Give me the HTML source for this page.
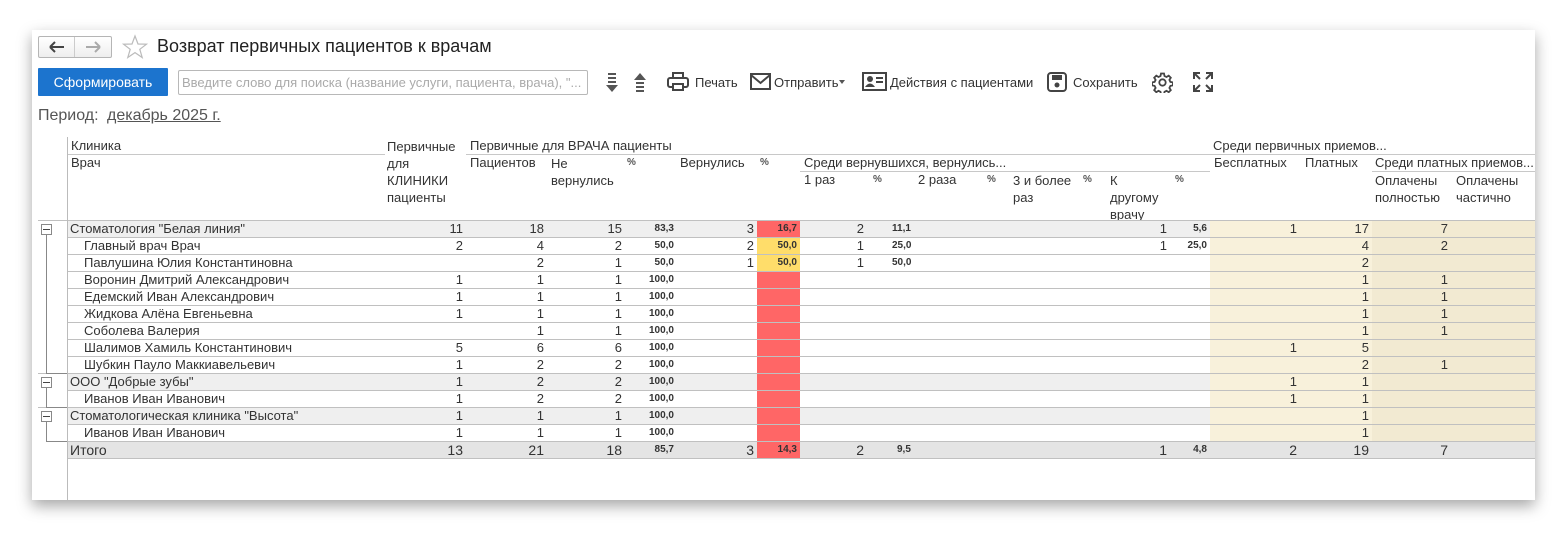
<!DOCTYPE html>
<html><head><meta charset="utf-8">
<style>
*{box-sizing:border-box;margin:0;padding:0}
body{width:1567px;height:533px;background:#fff;font-family:"Liberation Sans",Arial,sans-serif;color:#333;position:relative;overflow:hidden}
#panel{position:absolute;left:32px;top:30px;width:1503px;height:470px;background:#fff;box-shadow:0 6px 14px rgba(0,0,0,.35)}
.a{position:absolute;white-space:nowrap}
.tr{position:absolute;z-index:5}
.h{position:absolute;font-size:13px;color:#333;line-height:16px;white-space:nowrap}
.ln{position:absolute;height:1px;background:#c8c8c8}
table{position:absolute;left:38px;top:220px;border-collapse:collapse;table-layout:fixed;width:1497px}
td{height:17px;border-top:1px solid #c0c0c0;font-size:13px;line-height:16px;padding:0 3px;text-align:right;white-space:nowrap;overflow:hidden;color:#333}
td.n{text-align:left;padding-left:3px}
td.i{text-align:left;padding-left:17px}
td.p{font-size:10px;font-weight:bold;padding-right:3px;line-height:16px;vertical-align:middle}
td.t{border-top:none;background:#fff}
tr.g td{background:#efefef}
tr.s td{background:#e4e4e4;border-bottom:1px solid #c0c0c0}
tr.s td.nm{font-size:14px}
td.b1{background:#f8f1db!important}
td.b2{background:#f2ead2!important}
td.r{background:#ff6666!important}
td.y{background:#ffdd6a!important}
</style></head><body>
<div id="panel"></div>

<div class="a" style="left:38px;top:36px;width:74px;height:22px;border:1px solid #b5b5b5;border-radius:2px;background:linear-gradient(#fff,#eee)"></div>
<div class="a" style="left:74px;top:37px;width:1px;height:20px;background:#ccc"></div>
<svg class="a" style="left:48px;top:40px" width="18" height="14"><path d="M2 7H16M2 7L7 2M2 7L7 12" stroke="#444" stroke-width="2" fill="none"/></svg>
<svg class="a" style="left:84px;top:40px" width="18" height="14"><path d="M2 7H16M16 7L11 2M16 7L11 12" stroke="#aaa" stroke-width="2" fill="none"/></svg>
<svg class="a" style="left:122px;top:34px" width="26" height="25"><path d="M13 2L16 10L24.5 10.2L17.8 15.3L20.2 23.5L13 18.6L5.8 23.5L8.2 15.3L1.5 10.2L10 10Z" fill="none" stroke="#bbb" stroke-width="1.2"/></svg>
<div class="a" style="left:157px;top:36px;font-size:18px;color:#222">Возврат первичных пациентов к врачам</div>

<div class="a" style="left:38px;top:68px;width:130px;height:28px;background:#1c74ce;border-radius:1px;color:#fff;font-size:14px;line-height:28px;text-align:center">Сформировать</div>
<div class="a" style="left:178px;top:70px;width:410px;height:25px;border:1px solid #b8b8b8;border-radius:2px;font-size:13px;color:#aaa;line-height:23px;padding-left:3px">Введите слово для поиска (название услуги, пациента, врача), "...</div>

<svg class="a" style="left:605px;top:72px" width="14" height="22"><g fill="#555"><rect x="3" y="1" width="8" height="2"/><rect x="3" y="5" width="8" height="2"/><rect x="3" y="9" width="8" height="2"/><path d="M1 13H13L7 20Z"/></g></svg>
<svg class="a" style="left:633px;top:72px" width="14" height="22"><g fill="#555"><path d="M1 8H13L7 1Z"/><rect x="3" y="10" width="8" height="2"/><rect x="3" y="14" width="8" height="2"/><rect x="3" y="18" width="8" height="2"/></g></svg>
<svg class="a" style="left:667px;top:72px" width="22" height="20"><g fill="none" stroke="#444" stroke-width="2"><rect x="6" y="1" width="10" height="5"/><rect x="1" y="6" width="20" height="9" rx="2"/><rect x="6" y="12" width="10" height="6" fill="#fff"/></g></svg>
<div class="a" style="left:695px;top:75px;font-size:13px;color:#333">Печать</div>
<svg class="a" style="left:750px;top:73px" width="21" height="17"><rect x="1" y="1" width="19" height="15" fill="none" stroke="#444" stroke-width="2"/><path d="M1 2L10.5 10L20 2" fill="none" stroke="#444" stroke-width="2"/></svg>
<div class="a" style="left:774px;top:75px;font-size:13px;color:#333">Отправить</div>
<svg class="a" style="left:839px;top:80px" width="7" height="5"><path d="M0 0H6L3 4Z" fill="#555"/></svg>
<svg class="a" style="left:862px;top:72px" width="25" height="19"><rect x="1" y="1" width="23" height="17" fill="none" stroke="#444" stroke-width="2"/><circle cx="8" cy="7" r="3" fill="#444"/><path d="M3 15Q8 8 13 15Z" fill="#444"/><rect x="14" y="5" width="7" height="2" fill="#444"/><rect x="14" y="9" width="7" height="2" fill="#444"/></svg>
<div class="a" style="left:890px;top:75px;font-size:13px;color:#333">Действия с пациентами</div>
<svg class="a" style="left:1047px;top:72px" width="20" height="20"><rect x="1" y="1" width="18" height="18" rx="3" fill="none" stroke="#444" stroke-width="2"/><rect x="5" y="3" width="10" height="5" fill="#444"/><circle cx="10" cy="13" r="2.5" fill="#444"/></svg>
<div class="a" style="left:1073px;top:75px;font-size:13px;color:#333">Сохранить</div>
<svg class="a" style="left:1152px;top:72px" width="21" height="21" viewBox="0 0 21 21"><g fill="none" stroke="#444" stroke-width="1.8"><path d="M9 1.5h3l.5 2.5 2 1 2.2-1.4 2.1 2.1-1.4 2.2 1 2 2.5.5v3l-2.5.5-1 2 1.4 2.2-2.1 2.1-2.2-1.4-2 1-.5 2.5h-3l-.5-2.5-2-1-2.2 1.4-2.1-2.1 1.4-2.2-1-2-2.5-.5v-3l2.5-.5 1-2-1.4-2.2 2.1-2.1 2.2 1.4 2-1z"/><circle cx="10.5" cy="10.5" r="3.2"/></g></svg>
<svg class="a" style="left:1193px;top:72px" width="20" height="20"><g fill="none" stroke="#444" stroke-width="2"><path d="M1 7V1H7M1 1L7 7M13 1H19V7M19 1L13 7M1 13V19H7M1 19L7 13M19 13V19H13M19 19L13 13"/></g></svg>

<div class="a" style="left:38px;top:107px;font-size:16px;color:#555">Период:</div>
<div class="a" style="left:107px;top:107px;font-size:16px;color:#555;text-decoration:underline">декабрь 2025 г.</div>

<div class="a" style="left:67px;top:137px;width:1px;height:363px;background:#bbb;z-index:4"></div>
<div class="h" style="left:71px;top:138px">Клиника</div>
<div class="ln" style="left:68px;top:154px;width:317px"></div>
<div class="h" style="left:71px;top:155px">Врач</div>
<div class="h" style="left:387px;top:138px;line-height:17px">Первичные<br>для<br>КЛИНИКИ<br>пациенты</div>
<div class="h" style="left:470px;top:138px">Первичные для ВРАЧА пациенты</div>
<div class="ln" style="left:466px;top:154px;width:744px"></div>
<div class="h" style="left:470px;top:155px">Пациентов</div>
<div class="h" style="left:551px;top:155px;line-height:17px">Не<br>вернулись</div>
<div class="h" style="left:627px;top:155px;font-size:10px;font-weight:bold;color:#555">%</div>
<div class="h" style="left:680px;top:155px">Вернулись</div>
<div class="h" style="left:760px;top:155px;font-size:10px;font-weight:bold;color:#555">%</div>
<div class="h" style="left:804px;top:155px">Среди вернувшихся, вернулись...</div>
<div class="ln" style="left:800px;top:171px;width:410px"></div>
<div class="h" style="left:804px;top:172px">1 раз</div>
<div class="h" style="left:873px;top:172px;font-size:10px;font-weight:bold;color:#555">%</div>
<div class="h" style="left:918px;top:172px">2 раза</div>
<div class="h" style="left:987px;top:172px;font-size:10px;font-weight:bold;color:#555">%</div>
<div class="h" style="left:1013px;top:172px;line-height:17px">3 и более<br>раз</div>
<div class="h" style="left:1083px;top:172px;font-size:10px;font-weight:bold;color:#555">%</div>
<div class="h" style="left:1110px;top:172px;line-height:17px">К<br>другому<br>врачу</div>
<div class="h" style="left:1175px;top:172px;font-size:10px;font-weight:bold;color:#555">%</div>
<div class="h" style="left:1213px;top:138px">Среди первичных приемов...</div>
<div class="ln" style="left:1210px;top:154px;width:325px"></div>
<div class="h" style="left:1214px;top:155px">Бесплатных</div>
<div class="h" style="left:1305px;top:155px">Платных</div>
<div class="h" style="left:1375px;top:155px;width:160px;overflow:hidden">Среди платных приемов...</div>
<div class="ln" style="left:1372px;top:171px;width:163px"></div>
<div class="h" style="left:1375px;top:172px;line-height:17px">Оплачены<br>полностью</div>
<div class="h" style="left:1456px;top:172px;line-height:17px">Оплачены<br>частично</div>

<table>
<colgroup><col style="width:29px"><col style="width:318px"><col style="width:81px"><col style="width:81px"><col style="width:78px"><col style="width:52px"><col style="width:80px"><col style="width:43px"><col style="width:67px"><col style="width:48px"><col style="width:70px"><col style="width:25px"><col style="width:70px"><col style="width:27px"><col style="width:63px"><col style="width:40px"><col style="width:90px"><col style="width:72px"><col style="width:81px"><col style="width:82px"></colgroup>
<tr class="g"><td style="background:#fff"></td><td class="n">Стоматология "Белая линия"</td><td>11</td><td>18</td><td>15</td><td class="p">83,3</td><td>3</td><td class="p r">16,7</td><td>2</td><td class="p" style="text-align:left;padding-left:25px">11,1</td><td></td><td></td><td></td><td></td><td>1</td><td class="p">5,6</td><td class="b1">1</td><td class="b1">17</td><td class="b2" style="padding-right:5px">7</td><td class="b2"></td></tr>
<tr><td class="t"></td><td class="i">Главный врач Врач</td><td>2</td><td>4</td><td>2</td><td class="p">50,0</td><td>2</td><td class="p y">50,0</td><td>1</td><td class="p" style="text-align:left;padding-left:25px">25,0</td><td></td><td></td><td></td><td></td><td>1</td><td class="p">25,0</td><td class="b1"></td><td class="b1">4</td><td class="b2" style="padding-right:5px">2</td><td class="b2"></td></tr>
<tr><td class="t"></td><td class="i">Павлушина Юлия Константиновна</td><td></td><td>2</td><td>1</td><td class="p">50,0</td><td>1</td><td class="p y">50,0</td><td>1</td><td class="p" style="text-align:left;padding-left:25px">50,0</td><td></td><td></td><td></td><td></td><td></td><td></td><td class="b1"></td><td class="b1">2</td><td class="b2"></td><td class="b2"></td></tr>
<tr><td class="t"></td><td class="i">Воронин Дмитрий Александрович</td><td>1</td><td>1</td><td>1</td><td class="p">100,0</td><td></td><td class="r"></td><td></td><td></td><td></td><td></td><td></td><td></td><td></td><td></td><td class="b1"></td><td class="b1">1</td><td class="b2" style="padding-right:5px">1</td><td class="b2"></td></tr>
<tr><td class="t"></td><td class="i">Едемский Иван Александрович</td><td>1</td><td>1</td><td>1</td><td class="p">100,0</td><td></td><td class="r"></td><td></td><td></td><td></td><td></td><td></td><td></td><td></td><td></td><td class="b1"></td><td class="b1">1</td><td class="b2" style="padding-right:5px">1</td><td class="b2"></td></tr>
<tr><td class="t"></td><td class="i">Жидкова Алёна Евгеньевна</td><td>1</td><td>1</td><td>1</td><td class="p">100,0</td><td></td><td class="r"></td><td></td><td></td><td></td><td></td><td></td><td></td><td></td><td></td><td class="b1"></td><td class="b1">1</td><td class="b2" style="padding-right:5px">1</td><td class="b2"></td></tr>
<tr><td class="t"></td><td class="i">Соболева Валерия</td><td></td><td>1</td><td>1</td><td class="p">100,0</td><td></td><td class="r"></td><td></td><td></td><td></td><td></td><td></td><td></td><td></td><td></td><td class="b1"></td><td class="b1">1</td><td class="b2" style="padding-right:5px">1</td><td class="b2"></td></tr>
<tr><td class="t"></td><td class="i">Шалимов Хамиль Константинович</td><td>5</td><td>6</td><td>6</td><td class="p">100,0</td><td></td><td class="r"></td><td></td><td></td><td></td><td></td><td></td><td></td><td></td><td></td><td class="b1">1</td><td class="b1">5</td><td class="b2"></td><td class="b2"></td></tr>
<tr><td class="t"></td><td class="i">Шубкин Пауло Маккиавельевич</td><td>1</td><td>2</td><td>2</td><td class="p">100,0</td><td></td><td class="r"></td><td></td><td></td><td></td><td></td><td></td><td></td><td></td><td></td><td class="b1"></td><td class="b1">2</td><td class="b2" style="padding-right:5px">1</td><td class="b2"></td></tr>
<tr class="g"><td style="background:#fff"></td><td class="n">ООО "Добрые зубы"</td><td>1</td><td>2</td><td>2</td><td class="p">100,0</td><td></td><td class="r"></td><td></td><td></td><td></td><td></td><td></td><td></td><td></td><td></td><td class="b1">1</td><td class="b1">1</td><td class="b2"></td><td class="b2"></td></tr>
<tr><td class="t"></td><td class="i">Иванов Иван Иванович</td><td>1</td><td>2</td><td>2</td><td class="p">100,0</td><td></td><td class="r"></td><td></td><td></td><td></td><td></td><td></td><td></td><td></td><td></td><td class="b1">1</td><td class="b1">1</td><td class="b2"></td><td class="b2"></td></tr>
<tr class="g"><td style="background:#fff"></td><td class="n">Стоматологическая клиника "Высота"</td><td>1</td><td>1</td><td>1</td><td class="p">100,0</td><td></td><td class="r"></td><td></td><td></td><td></td><td></td><td></td><td></td><td></td><td></td><td class="b1"></td><td class="b1">1</td><td class="b2"></td><td class="b2"></td></tr>
<tr><td class="t"></td><td class="i">Иванов Иван Иванович</td><td>1</td><td>1</td><td>1</td><td class="p">100,0</td><td></td><td class="r"></td><td></td><td></td><td></td><td></td><td></td><td></td><td></td><td></td><td class="b1"></td><td class="b1">1</td><td class="b2"></td><td class="b2"></td></tr>
<tr class="s"><td style="background:#fff;border-bottom:none;border-top:none"></td><td class="n nm">Итого</td><td style="font-size:14px">13</td><td style="font-size:14px">21</td><td style="font-size:14px">18</td><td class="p">85,7</td><td style="font-size:14px">3</td><td class="p r">14,3</td><td style="font-size:14px">2</td><td class="p" style="text-align:left;padding-left:30px">9,5</td><td></td><td></td><td></td><td></td><td style="font-size:14px">1</td><td class="p">4,8</td><td style="font-size:14px">2</td><td style="font-size:14px">19</td><td style="font-size:14px;padding-right:5px">7</td><td></td></tr>
</table>

<div class="tr" style="left:41px;top:224px;width:11px;height:11px;border:1px solid #888;background:#fff"></div><div class="tr" style="left:43px;top:229px;width:7px;height:1px;background:#444;z-index:6"></div>
<div class="tr" style="left:46px;top:235px;width:1px;height:139px;background:#888"></div><div class="tr" style="left:46px;top:373px;width:21px;height:1px;background:#888"></div>
<div class="tr" style="left:41px;top:377px;width:11px;height:11px;border:1px solid #888;background:#fff"></div><div class="tr" style="left:43px;top:382px;width:7px;height:1px;background:#444;z-index:6"></div>
<div class="tr" style="left:46px;top:388px;width:1px;height:19px;background:#888"></div><div class="tr" style="left:46px;top:407px;width:21px;height:1px;background:#888"></div>
<div class="tr" style="left:41px;top:411px;width:11px;height:11px;border:1px solid #888;background:#fff"></div><div class="tr" style="left:43px;top:416px;width:7px;height:1px;background:#444;z-index:6"></div>
<div class="tr" style="left:46px;top:422px;width:1px;height:19px;background:#888"></div><div class="tr" style="left:46px;top:441px;width:21px;height:1px;background:#888"></div>
</body></html>
